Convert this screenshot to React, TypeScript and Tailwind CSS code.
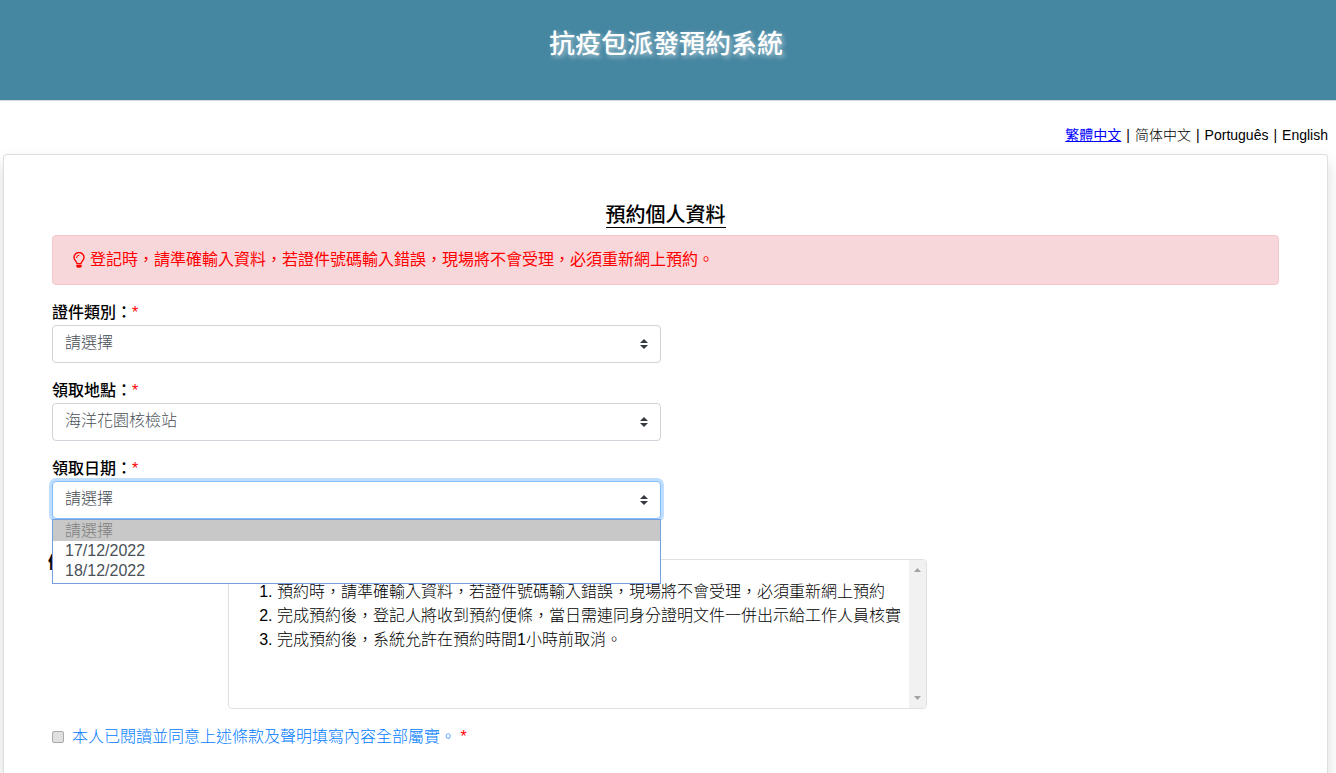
import { useState } from "react";
import type { ReactNode } from "react";

const languages = ["繁體中文", "简体中文", "Português", "English"];

const notes = [
  "預約時，請準確輸入資料，若證件號碼輸入錯誤，現場將不會受理，必須重新網上預約",
  "完成預約後，登記人將收到預約便條，當日需連同身分證明文件一併出示給工作人員核實",
  "完成預約後，系統允許在預約時間1小時前取消。",
];

const dates = ["17/12/2022", "18/12/2022"];

function Required() {
  return <span className="font-normal text-[#ff0000]">*</span>;
}

function Bulb() {
  return (
    <svg viewBox="0 0 12 16" className="h-4 w-3 shrink-0" fill="none" aria-hidden="true">
      <path
        d="M4 11.6C4 9.6 1 8.3 1 5.4A5 4.9 0 0 1 11 5.4C11 8.3 8 9.6 8 11.6Z"
        stroke="#ff0000"
        strokeWidth="1.4"
        strokeLinejoin="round"
      />
      <path d="M3.5 5.6A2.5 2.4 0 0 1 6 3.2" stroke="#ff0000" strokeWidth="1" strokeLinecap="round" />
      <path d="M3.3 12.8H8.7V14.2L7.6 15.8H4.4L3.3 14.2Z" fill="#ff0000" />
    </svg>
  );
}

type FieldProps = {
  id: string;
  label: string;
  options: string[];
  open?: boolean;
  children?: ReactNode;
};

function Field({ id, label, options, open = false, children }: FieldProps) {
  const [value, setValue] = useState(options[0]);
  return (
    <div className="mb-4 w-full max-w-[609px]">
      <label htmlFor={id} className="block font-medium text-black">
        {label}
        <Required />
      </label>
      <div className="relative">
        <select
          id={id}
          value={value}
          onChange={(e) => setValue(e.target.value)}
          className={
            open
              ? "block h-[38px] w-full appearance-none rounded border border-[#80bdff] bg-white px-3 pb-[2px] font-light text-[#495057] ring-3 ring-[#bfdeff] outline-none"
              : "block h-[38px] w-full appearance-none rounded border border-[#ced4da] bg-white px-3 pb-[2px] font-light text-[#495057] outline-none"
          }
        >
          {options.map((option) => (
            <option key={option}>{option}</option>
          ))}
        </select>
        <svg
          viewBox="0 0 4 5"
          className="pointer-events-none absolute top-[14px] right-[13px] h-[10px] w-2"
          aria-hidden="true"
        >
          <path fill="#343a40" d="M2 0L0 2h4zm0 5L0 3h4z" />
        </svg>
        {children}
      </div>
    </div>
  );
}

export default function App() {
  const [agreed, setAgreed] = useState(false);
  return (
    <div
      lang="zh-Hant"
      className="flex min-h-screen flex-col overflow-x-hidden bg-white font-['Liberation_Sans','Noto_Sans_CJK_TC',sans-serif] text-base text-black"
    >
      <header className="h-[101px] border-b border-[#d5d9dc] bg-[#4586a1] pt-6 pr-1 text-center">
        <h1 className="text-[26px] leading-9 font-medium text-white [text-shadow:2px_2px_5px_rgba(255,255,255,0.6)]">
          <span className="font-['Noto_Sans_CJK_TC',sans-serif]">抗疫包派發預約系統</span>
        </h1>
      </header>

      <nav className="mt-6 flex justify-end gap-[5px] pr-2 text-sm leading-5 font-light">
        {languages.map((language, i) => (
          <span key={language} className="flex gap-[5px]">
            {i > 0 && <span>|</span>}
            <a href="#" className={i === 0 ? "font-normal text-[#0000ff] underline" : "text-black"}>
              {language}
            </a>
          </span>
        ))}
      </nav>

      <main className="mt-[9px] mr-2 ml-[3px] grow rounded-t border border-b-0 border-[#dfdfdf] bg-white px-12 pt-12 shadow-[0_8px_16px_rgba(0,0,0,0.15)]">
        <div className="text-center">
          <h2 className="inline-block border-b border-black text-xl leading-6 font-medium">預約個人資料</h2>
        </div>

        <div
          role="alert"
          className="mt-[6px] mb-4 flex items-center gap-[5px] rounded border border-[#f5c6cb] bg-[#f8d7da] px-5 py-3 leading-6 text-[#ff0000]"
        >
          <Bulb />
          <span>登記時，請準確輸入資料，若證件號碼輸入錯誤，現場將不會受理，必須重新網上預約。</span>
        </div>

        <form>
          <Field id="doc-type" label="證件類別：" options={["請選擇"]} />
          <Field id="place" label="領取地點：" options={["海洋花園核檢站"]} />
          <Field id="date" label="領取日期：" options={["請選擇", ...dates]} open>
            <ul
              role="listbox"
              aria-label="領取日期"
              className="absolute top-full right-0 left-0 z-10 border border-[#7a9edb] bg-white pb-[2px] leading-5 font-light text-[#495057]"
            >
              <li role="option" aria-selected="true" className="bg-[#c8c8c8] px-3 pt-px text-[#808080]">
                請選擇
              </li>
              {dates.map((date) => (
                <li key={date} role="option" aria-selected="false" className="px-3">
                  {date}
                </li>
              ))}
            </ul>
          </Field>

          <div className="-ml-1 flex pt-6">
            <h3 className="-mt-2 w-[180px] shrink-0 font-bold">備註：</h3>
            <div className="flex h-[150px] w-full max-w-[699px] overflow-hidden rounded border border-[#dee2e6] bg-white">
              <ol className="grow list-decimal py-5 pl-12 leading-6 font-light">
                {notes.map((note) => (
                  <li key={note}>{note}</li>
                ))}
              </ol>
              <div className="flex w-[17px] shrink-0 flex-col items-center justify-between bg-[#f1f1f1] py-2" aria-hidden="true">
                <svg viewBox="0 0 7 4" className="h-1 w-[7px]">
                  <path d="M0 4L3.5 0L7 4Z" fill="#a3a3a3" />
                </svg>
                <svg viewBox="0 0 7 4" className="h-1 w-[7px]">
                  <path d="M0 0L3.5 4L7 0Z" fill="#a3a3a3" />
                </svg>
              </div>
            </div>
          </div>

          <div className="mt-4 flex items-center gap-2">
            <input
              id="agree"
              type="checkbox"
              checked={agreed}
              onChange={(e) => setAgreed(e.target.checked)}
              className="size-3 appearance-none rounded-xs border border-[#a9a9a9] bg-[#e0e0e0] checked:bg-[#007bff]"
            />
            <label htmlFor="agree" className="font-light text-[#007bff]">
              本人已閱讀並同意上述條款及聲明填寫內容全部屬實。 <Required />
            </label>
          </div>
        </form>
      </main>
    </div>
  );
}
